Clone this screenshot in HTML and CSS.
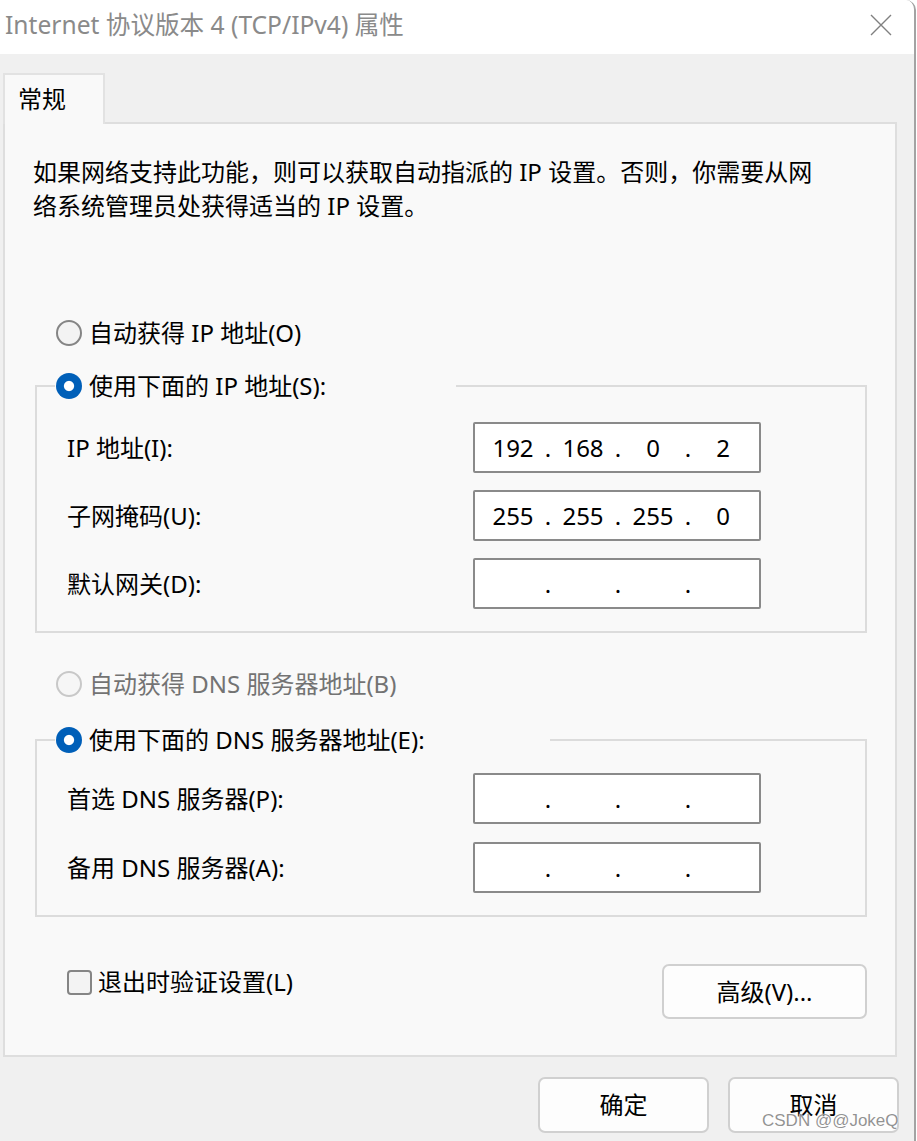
FILE: index.html
```html
<!DOCTYPE html>
<html lang="zh-CN">
<head>
<meta charset="utf-8">
<title>Internet 协议版本 4 (TCP/IPv4) 属性</title>
<link rel="stylesheet" href="styles.css">
</head>
<body>
<div class="window">
  <div class="titlebar">
    <span class="title">Internet 协议版本 4 (TCP/IPv4) 属性</span>
    <svg class="close" width="22" height="22" viewBox="0 0 22 22"><path d="M1 1L21 21M21 1L1 21" stroke="#808080" stroke-width="1.4" fill="none"/></svg>
  </div>
  <div class="content">
    <div class="tabs"><div class="tab">常规</div></div>
    <div class="panel">
      <p class="desc">如果网络支持此功能，则可以获取自动指派的 IP 设置。否则，你需要从网<br>络系统管理员处获得适当的 IP 设置。</p>

      <div class="radio-row auto-ip"><span class="radio"></span><span>自动获得 IP 地址(O)</span></div>

      <fieldset class="group group-ip">
        <legend class="radio-row legend-ip"><span class="radio checked"></span><span>使用下面的 IP 地址(S):</span></legend>
        <div class="field-row first">
          <span class="field-label">IP 地址(I):</span>
          <div class="ip"><span class="seg">192</span><span class="dot">.</span><span class="seg">168</span><span class="dot">.</span><span class="seg">0</span><span class="dot">.</span><span class="seg">2</span></div>
        </div>
        <div class="field-row">
          <span class="field-label">子网掩码(U):</span>
          <div class="ip"><span class="seg">255</span><span class="dot">.</span><span class="seg">255</span><span class="dot">.</span><span class="seg">255</span><span class="dot">.</span><span class="seg">0</span></div>
        </div>
        <div class="field-row">
          <span class="field-label">默认网关(D):</span>
          <div class="ip"><span class="seg"></span><span class="dot">.</span><span class="seg"></span><span class="dot">.</span><span class="seg"></span><span class="dot">.</span><span class="seg"></span></div>
        </div>
      </fieldset>

      <div class="radio-row auto-dns disabled"><span class="radio"></span><span>自动获得 DNS 服务器地址(B)</span></div>

      <fieldset class="group group-dns">
        <legend class="radio-row legend-dns"><span class="radio checked"></span><span>使用下面的 DNS 服务器地址(E):</span></legend>
        <div class="field-row first">
          <span class="field-label">首选 DNS 服务器(P):</span>
          <div class="ip"><span class="seg"></span><span class="dot">.</span><span class="seg"></span><span class="dot">.</span><span class="seg"></span><span class="dot">.</span><span class="seg"></span></div>
        </div>
        <div class="field-row gap18">
          <span class="field-label">备用 DNS 服务器(A):</span>
          <div class="ip"><span class="seg"></span><span class="dot">.</span><span class="seg"></span><span class="dot">.</span><span class="seg"></span><span class="dot">.</span><span class="seg"></span></div>
        </div>
      </fieldset>

      <div class="bottom-row">
        <div class="check-row"><span class="checkbox"></span><span>退出时验证设置(L)</span></div>
        <button class="btn btn-adv">高级(V)...</button>
      </div>
    </div>
    <div class="actions">
      <button class="btn btn-action">确定</button>
      <button class="btn btn-action">取消</button>
    </div>
  </div>
  <div class="watermark">CSDN @@JokeQ</div>
</div>
</body>
</html>
```
FILE: styles.css
```css
* { box-sizing: border-box; }
html, body { margin: 0; padding: 0; }
body {
  background: #ffffff;
  width: 917px;
  height: 1141px;
  overflow: hidden;
  font-family: "Noto Sans", "Noto Sans CJK SC", sans-serif;
  font-size: 24px;
  color: #000;
}
.window {
  position: relative;
  width: 916px;
  height: 1141px;
  border-right: 2px solid #a3a3a3;
  border-top-right-radius: 10px;
  overflow: hidden;
  background: #f0f0f0;
}
.titlebar {
  height: 54px;
  background: #ffffff;
  display: flex;
  align-items: center;
  justify-content: space-between;
  padding: 0 22px 4px 5px;
}
.title {
  font-size: 24.6px;
  line-height: 30px;
  color: #8a8a8a;
  white-space: nowrap;
}
.close { display: block; margin-top: 0; }
.content {
  padding: 19px 0 0 3px;
}
.tabs { display: flex; }
.tab {
  width: 102px;
  height: 51px;
  margin-bottom: -2px;
  background: #f9f9f9;
  border: 2px solid #e2e2e2;
  border-bottom: none;
  padding: 9px 0 0 13px;
  line-height: 30px;
  position: relative;
  z-index: 1;
}
.panel {
  width: 894px;
  height: 935px;
  background: #f9f9f9;
  border: 2px solid #dedede;
  padding: 31px 28px 0 28px;
}
.desc {
  margin: 0;
  line-height: 34px;
  white-space: nowrap;
}
.radio-row {
  display: flex;
  align-items: center;
  height: 36px;
  line-height: 36px;
  white-space: nowrap;
}
.radio {
  width: 26px;
  height: 26px;
  border-radius: 50%;
  border: 2px solid #858585;
  background: #f3f3f3;
  margin-right: 7px;
  flex: none;
}
.radio.checked {
  border: none;
  background: radial-gradient(circle, #ffffff 0, #ffffff 4.6px, #005fb8 5.6px);
}
.auto-ip { margin-top: 92px; padding-left: 23px; }
.auto-dns { margin-top: 33px; padding-left: 23px; }
.disabled { color: #737373; }
.disabled .radio { border-color: #c8c8c8; background: #f6f6f6; }

.group {
  margin: 17px 0 0 2px;
  padding: 0 0 22px 0;
  width: 832px;
  min-inline-size: 0;
  border: 2px solid #dcdcdc;
}
.group-dns { margin-top: 20px; }
.group legend {
  padding: 0 0 0 1px;
  margin-left: 18px;
}
.legend-ip { width: 401px; }
.legend-dns { width: 495px; }

.field-row {
  display: flex;
  align-items: center;
  margin: 17px 0 0 30px;
}
.field-row.first { margin-top: 18px; }
.group-dns .field-row.first { margin-top: 15px; }
.field-row.gap18 { margin-top: 18px; }
.field-label {
  width: 406px;
  line-height: 30px;
  white-space: nowrap;
}
.ip {
  width: 288px;
  height: 51px;
  border: 2px solid #8a8a8a;
  border-radius: 2px;
  background: #ffffff;
  display: flex;
  align-items: center;
  padding-left: 10px;
  line-height: 30px;
}
.seg { width: 56px; text-align: center; }
.dot { width: 14px; text-align: center; }

.bottom-row {
  display: flex;
  justify-content: space-between;
  align-items: flex-start;
  width: 832px;
  margin: 47px 0 0 2px;
}
.check-row {
  display: flex;
  align-items: center;
  height: 36px;
  line-height: 36px;
  padding-left: 32px;
}
.checkbox {
  width: 25px;
  height: 25px;
  border: 2px solid #858585;
  border-radius: 4px;
  background: #f3f3f3;
  margin-right: 6px;
}
.btn {
  font-family: inherit;
  font-size: 24px;
  color: #000;
  background: #fdfdfd;
  border: 2px solid #d0d0d0;
  border-radius: 7px;
  padding: 0;
  line-height: 30px;
}
.btn-adv { width: 205px; height: 55px; }
.actions {
  display: flex;
  justify-content: flex-end;
  gap: 19px;
  width: 896px;
  margin-top: 20px;
}
.btn-action { width: 171px; height: 56px; }
.watermark {
  position: absolute;
  left: 762px;
  top: 1110px;
  font-family: "Liberation Sans", Arial, sans-serif;
  font-size: 17px;
  line-height: 22px;
  color: rgba(110, 110, 110, 0.75);
  text-shadow: 0 0 2px #fff, 0 0 1px #fff;
  white-space: nowrap;
}
```
